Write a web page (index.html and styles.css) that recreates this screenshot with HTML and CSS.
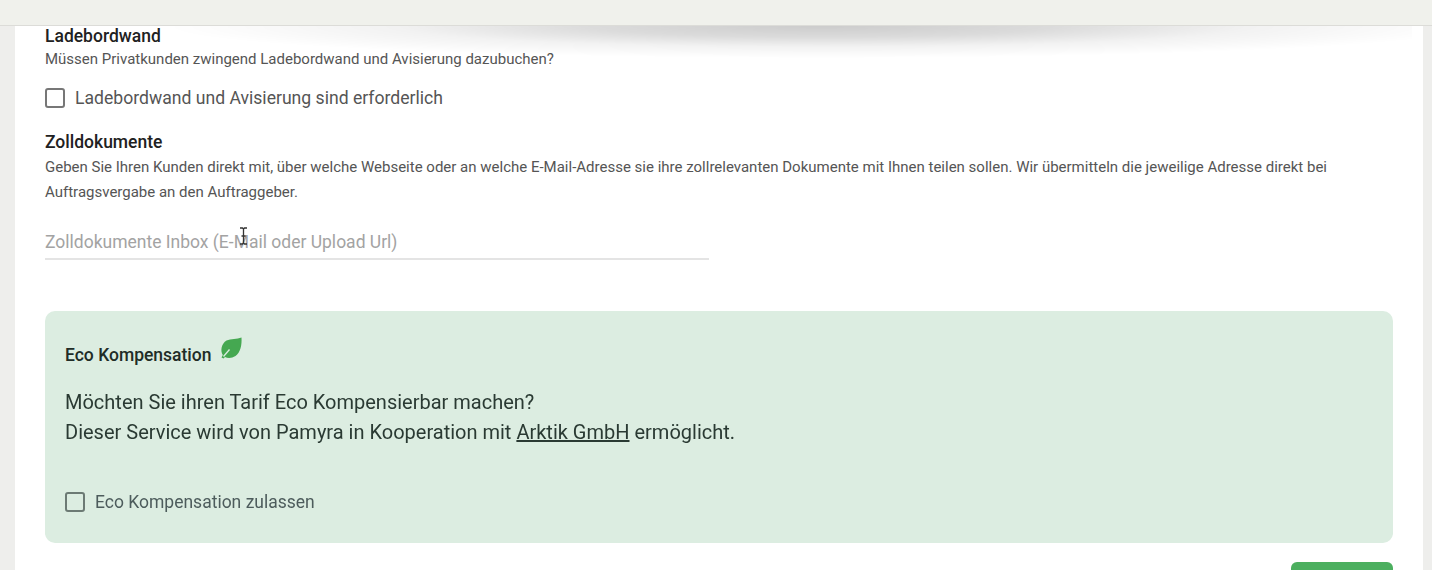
FILE: index.html
```html
<!DOCTYPE html>
<html lang="de">
<head>
<meta charset="utf-8">
<title>Tarif</title>
<link rel="stylesheet" href="styles.css">
</head>
<body>
<header class="topbar"></header>
<main class="card">
  <section class="block-lade">
    <h3 class="title">Ladebordwand</h3>
    <p class="desc">Müssen Privatkunden zwingend Ladebordwand und Avisierung dazubuchen?</p>
    <label class="check check-lg"><span class="box"></span><span>Ladebordwand und Avisierung sind erforderlich</span></label>
  </section>
  <section class="block-zoll">
    <h3 class="title">Zolldokumente</h3>
    <p class="desc desc-long">Geben Sie Ihren Kunden direkt mit, über welche Webseite oder an welche E-Mail-Adresse sie ihre zollrelevanten Dokumente mit Ihnen teilen sollen. Wir übermitteln die jeweilige Adresse direkt bei Auftragsvergabe an den Auftraggeber.</p>
    <div class="field">Zolldokumente Inbox (E-Mail oder Upload Url)</div>
  </section>
  <section class="eco">
    <div class="eco-head">
      <h3 class="eco-title">Eco Kompensation</h3>
      <svg class="leaf" viewBox="0 0 22 22" width="22" height="22" aria-hidden="true"><path fill="#45a851" d="M21.500 0.500C22 8 20.500 15.500 15.500 19c-3.500 2.300-7.500 2.500-10.500 1L3.500 21.500 1.500 20.500 2.800 18C0 13.500 1.500 6.500 6.500 3.500 11 1.500 17 2.500 21.500 0.500z"/><path fill="none" stroke="#dcede1" stroke-width="1.300" d="M3.500 19.500 9.500 12.500"/></svg>
    </div>
    <p class="eco-text">Möchten Sie ihren Tarif Eco Kompensierbar machen?<br>Dieser Service wird von Pamyra in Kooperation mit <a href="#">Arktik GmbH</a> ermöglicht.</p>
    <label class="check check-sm"><span class="box box-sm"></span><span>Eco Kompensation zulassen</span></label>
  </section>
  <div class="actions"><button class="save" type="button"></button></div>
</main>
<svg class="cursor" viewBox="0 0 9 18" width="9" height="18" aria-hidden="true"><path fill="none" stroke="#333" stroke-width="1.300" d="M1 1h2.500l1 1 1-1H8M4.500 2v14M1 17h2.500l1-1 1 1H8M2.500 9h4"/></svg>
</body>
</html>
```
FILE: styles.css
```css
* { box-sizing: border-box; }
html, body { height: 570px; overflow: hidden; }
body {
  margin: 0;
  background: #eeeeec;
  font-family: Roboto, "Liberation Sans", sans-serif;
  color: #212121;
  position: relative;
}
.topbar {
  position: relative;
  z-index: 2;
  height: 26px;
  background: #f0f1ec;
  border-bottom: 1px solid #dcdcd8;
}
.topbar::after {
  content: "";
  position: absolute;
  left: 100px;
  right: 20px;
  top: 26px;
  height: 32px;
  background: radial-gradient(ellipse 50% 100% at 55% 0, rgba(0,0,0,.2), rgba(0,0,0,.14) 35%, rgba(0,0,0,.05) 65%, rgba(0,0,0,0) 100%);
}
.card {
  margin: 0 9px 0 15px;
  height: 544px;
  background: #fff;
  padding: 0 30px;
  filter: blur(.35px);
}
.title {
  margin: 0;
  font-size: 17.5px;
  line-height: 19px;
  font-weight: 500;
  color: #212121;
}
.desc {
  margin: 1px 0 0;
  font-size: 15px;
  line-height: 25px;
  color: #555;
}
.block-lade { padding-top: 1px; }
.check { display: flex; align-items: center; }
.check-lg {
  gap: 10px;
  margin-top: 16px;
  font-size: 17.6px;
  line-height: 20px;
  color: #555;
}
.box {
  width: 20px;
  height: 20px;
  border: 2px solid #777;
  border-radius: 3px;
  flex: none;
}
.block-zoll { margin-top: 25px; }
.desc-long { margin-top: 3px; }
.field {
  width: 664px;
  margin-top: 25px;
  padding-bottom: 4px;
  font-size: 17.5px;
  line-height: 24px;
  color: #a3a3a3;
  border-bottom: 2px solid #e4e4e4;
}
.eco {
  margin-top: 51px;
  height: 232px;
  padding: 26px 20px 0;
  background: #dcede1;
  border-radius: 10px;
}
.eco-head { display: flex; align-items: flex-start; gap: 8px; }
.eco-title {
  margin: 9px 0 0;
  font-size: 17.5px;
  line-height: 19px;
  font-weight: 500;
  color: #212c27;
}
.leaf { flex: none; }
.eco-text {
  margin: 22px 0 0;
  font-size: 20px;
  line-height: 30px;
  color: #2a3a33;
}
.eco-text a { color: inherit; }
.check-sm {
  gap: 10px;
  margin-top: 45px;
  font-size: 17.5px;
  line-height: 20px;
  color: #4d5c5c;
}
.box-sm { border-color: #6c7a74; }
.actions { display: flex; justify-content: flex-end; margin-top: 19px; }
.save {
  width: 102px;
  height: 36px;
  border: 0;
  border-radius: 6px;
  background: #4caf5f;
}
.cursor { position: absolute; left: 239px; top: 227px; z-index: 3; }
```
